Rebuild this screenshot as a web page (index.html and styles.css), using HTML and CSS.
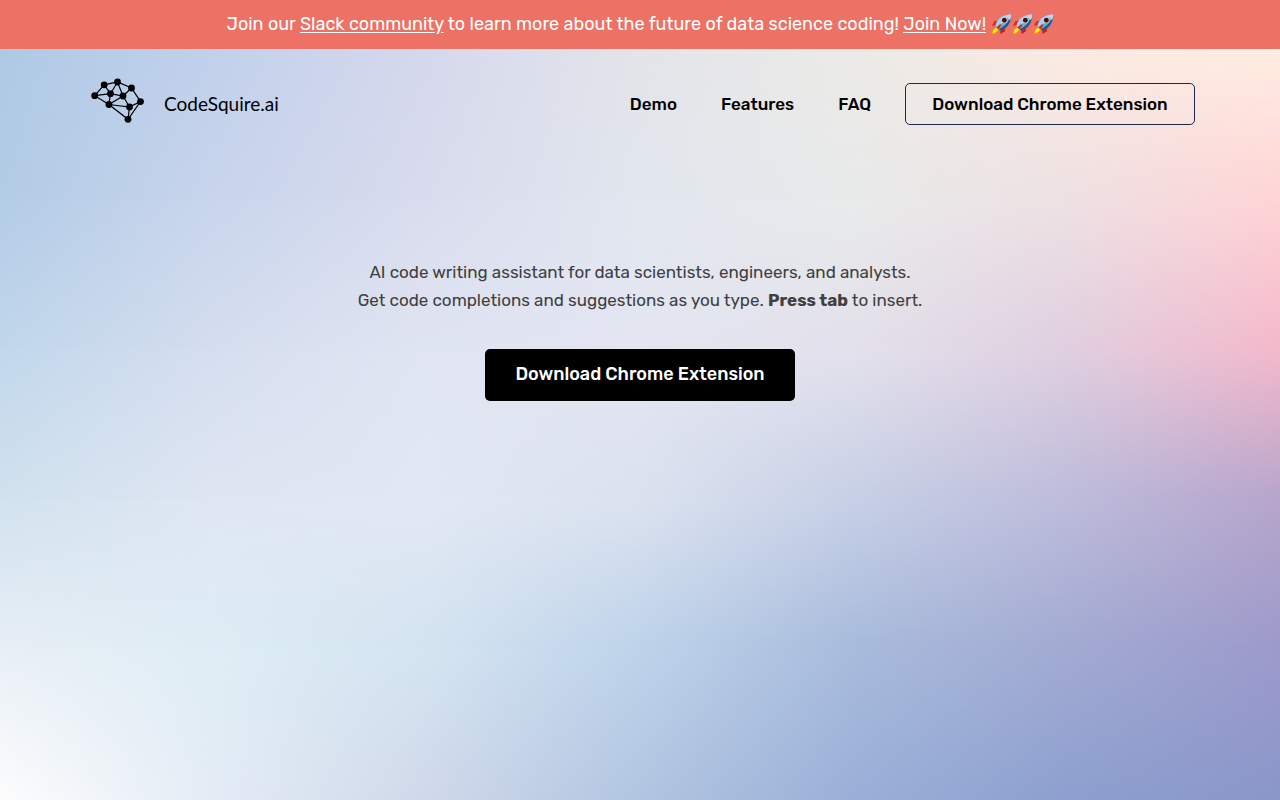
FILE: index.html
```
<!DOCTYPE html>
<html lang="en">
<head>
<meta charset="utf-8">
<meta name="viewport" content="width=device-width, initial-scale=1">
<title>CodeSquire.ai</title>
<link rel="stylesheet" href="styles.css">
</head>
<body>
<svg class="symbols" aria-hidden="true">
  <symbol id="rocket" viewBox="0 0 22 22">
    <path d="M7 11 .8 12.500 3.500 7.500 10 6.500Z" fill="#e32b1b"/>
    <path d="M9.500 15.500 15 11.500 14.500 18 10 21Z" fill="#d9150f"/>
    <path d="M5.500 12.500 1 17 .3 21.500 4.500 21 9.500 16.500Z" fill="#ff8a12"/>
    <path d="M5.500 14 2.500 17 1.500 20.500 5 19 8 16Z" fill="#ffe536"/>
    <path d="M4.800 12C6.500 5 12 .5 21.300 .5 21.500 9 16.500 15.500 9.500 17.500Z" fill="#6aa9d8"/>
    <path d="M4.800 12C6.500 5 12 .5 21.300 .5L7 14.500Z" fill="#a9cfe8"/>
    <path d="M21.300 .5C21.500 9 16.500 15.500 9.500 17.500L8 16C14 13.500 19 8 21.300 .5Z" fill="#24557f"/>
    <path d="M15.500 1.800C17.500 .8 19.500 .5 21.300 .5 21.300 2.800 20.800 4.800 19.800 6.500Z" fill="#c9d3da"/>
    <circle cx="14" cy="6.500" r="3.200" fill="#e8dfd9"/>
    <circle cx="14" cy="6.500" r="2.600" fill="#35151c"/>
    <path d="M5.500 14.500 9.500 10.500 11 11.500 8 16Z" fill="#d52820"/>
  </symbol>
</svg>
<div class="banner">
  <p class="banner-text">Join our <a href="#slack">Slack community</a> to learn more about the future of data science coding! <a href="#slack">Join Now!</a>
    <span class="rockets" role="img" aria-label="rockets"><svg class="rocket"><use href="#rocket"/></svg><svg class="rocket"><use href="#rocket"/></svg><svg class="rocket"><use href="#rocket"/></svg></span></p>
</div>
<div class="page">
  <div class="mesh" aria-hidden="true">
    <div class="band band-6"></div>
    <div class="band band-5"></div>
    <div class="band band-4"></div>
    <div class="band band-3"></div>
    <div class="band band-2"></div>
    <div class="band band-1"></div>
  </div>
  <header class="header">
    <a class="brand" href="#home">
      <svg class="brand-mark" viewBox="0 0 56 48" aria-hidden="true">
        <path d="M4.700 19.700 14.200 8.800 27.500 6 41.500 12 50.500 25.600 38 43.300 18.900 28.500ZM4.700 19.700 20.500 17.700 33 20 41.500 12M14.200 8.800 20.500 17.700 27.500 6 33 20 18.900 28.500 20.500 17.700M33 20 39.500 31 18.900 28.500M50.500 25.600 39.500 31 38 43.300" fill="none" stroke="#000" stroke-width="1.200"/>
        <g><circle cx="4.700" cy="19.700" r="3.400"/><circle cx="14.200" cy="8.800" r="3.400"/><circle cx="27.500" cy="6" r="3.400"/><circle cx="41.500" cy="12" r="3.400"/><circle cx="50.500" cy="25.600" r="3.400"/><circle cx="38" cy="43.300" r="3.400"/><circle cx="18.900" cy="28.500" r="3.400"/><circle cx="20.500" cy="17.700" r="3.400"/><circle cx="33" cy="20" r="3.400"/><circle cx="39.500" cy="31" r="3.400"/></g>
      </svg>
      <span class="brand-name">CodeSquire.ai</span>
    </a>
    <nav class="nav">
      <a class="nav-link" href="#demo">Demo</a>
      <a class="nav-link" href="#features">Features</a>
      <a class="nav-link" href="#faq">FAQ</a>
      <a class="button button-outline" href="#download">Download Chrome Extension</a>
    </nav>
  </header>
  <main class="hero">
    <p class="hero-text">AI code writing assistant for data scientists, engineers, and analysts.<br>Get code completions and suggestions as you type. <strong>Press tab</strong> to insert.</p>
    <a class="button button-solid" href="#download">Download Chrome Extension</a>
  </main>
</div>
</body>
</html>
```
FILE: styles.css
```
* { box-sizing: border-box; }

body {
  margin: 0;
  min-height: 100vh;
  display: flex;
  flex-direction: column;
  font-family: Rubik, Roboto, sans-serif;
  font-size: 17px;
  color: #000;
}

a { color: inherit; }

.symbols { position: absolute; width: 0; height: 0; }

.banner {
  padding: 10px 16px 11px;
  background: #ed7164;
  color: #fff;
  text-align: center;
}

.banner-text { margin: 0; font-size: 18px; line-height: 28px; }
.banner-text a { text-underline-offset: 2px; }
.rockets { display: inline-flex; vertical-align: middle; padding-bottom: 2px; }
.rocket { width: 21px; height: 21px; }

.page {
  position: relative;
  flex: 1;
  display: flex;
  flex-direction: column;
}

/* Colour mesh: each band is a horizontal blend that fades into the next. */
.mesh, .band { position: absolute; inset: 0; }
.mesh { z-index: -1; overflow: hidden; }
.band-1 {
  background: linear-gradient(90deg, #aec9e4, #c1d0eb, #d5d8ec, #e3e4e9, #ebeae6, #fbeae2, #ffede1);
  mask-image: linear-gradient(#000 0%, transparent 20%);
}
.band-2 {
  background: linear-gradient(90deg, #b3cce6, #c8d5ec, #d9dcee, #e2e7ef, #e8eaea, #eee1e3, #ffd4d6);
  mask-image: linear-gradient(#000 20%, transparent 40%);
}
.band-3 {
  background: linear-gradient(90deg, #c1d7eb, #d5deef, #e0e5f2, #e4e6f2, #e3e1ec, #e0cfe0, #f4b9cb);
  mask-image: linear-gradient(#000 40%, transparent 60%);
}
.band-4 {
  background: linear-gradient(90deg, #d1e2ee, #dfe6f3, #e2e8f4, #dbe2ef, #c7d0e6, #bdbcdb, #b7a5cb);
  mask-image: linear-gradient(#000 60%, transparent 80%);
}
.band-5 {
  background: linear-gradient(90deg, #e8eff6, #deedf5, #d4e4f1, #bed3ea, #a8bbdc, #a2aad2, #9c9acb);
  mask-image: linear-gradient(#000 80%, transparent 100%);
}
.band-6 {
  background: linear-gradient(90deg, #fdfdfd, #e4ecf6, #d0d9ea, #b2c5e1, #9ab0d8, #8da0cf, #8a97c9);
}

.header {
  width: 100%;
  max-width: 1110px;
  margin: 0 auto;
  padding-top: 27px;
  display: flex;
  align-items: flex-start;
  justify-content: space-between;
}

.brand {
  display: flex;
  align-items: center;
  gap: 18px;
  padding-left: 5px;
  text-decoration: none;
}
.brand-mark { width: 56px; height: 48px; }
.brand-name { padding-top: 8px; font-family: Lato, sans-serif; font-size: 19px; line-height: 24px; }

.nav { display: flex; align-items: center; gap: 44px; padding-top: 7px; }
.nav-link { line-height: 28px; font-weight: 500; text-decoration: none; }

.button {
  border-radius: 5px;
  font-weight: 500;
  line-height: 28px;
  text-align: center;
  text-decoration: none;
}
.button-outline {
  width: 290px;
  margin-left: -10px;
  padding: 6px 16px;
  border: 1px solid #1b2a4a;
}
.button-solid {
  width: 310px;
  padding: 11px 16px 13px;
  background: #000;
  color: #fff;
  font-size: 18px;
}

.hero {
  display: flex;
  flex-direction: column;
  align-items: center;
  gap: 35px;
  padding: 133px 16px 0;
}
.hero-text { margin: 0; color: #404040; text-align: center; line-height: 28px; }
```
